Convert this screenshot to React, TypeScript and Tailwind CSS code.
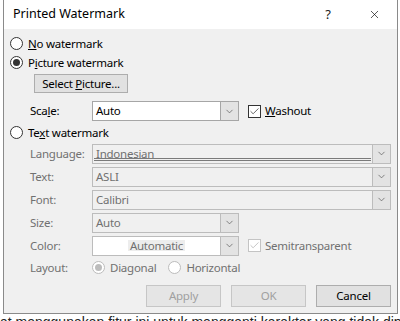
import { Check, ChevronDown, X } from "lucide-react";

const font = { fontFamily: '"Noto Sans", sans-serif' };

function Radio({ checked, disabled }: { checked?: boolean; disabled?: boolean }) {
  return (
    <span
      className={`flex h-[13px] w-[13px] shrink-0 items-center justify-center rounded-full border bg-white ${
        disabled ? "border-[#bcbcbc]" : "border-[#333333]"
      }`}
    >
      {checked && (
        <span className={`h-[7px] w-[7px] rounded-full ${disabled ? "bg-[#bcbcbc]" : "bg-[#333333]"}`} />
      )}
    </span>
  );
}

function Combo({
  value,
  wide,
  disabled,
  white,
  center,
  underline,
}: {
  value: string;
  wide?: boolean;
  disabled?: boolean;
  white?: boolean;
  center?: boolean;
  underline?: boolean;
}) {
  return (
    <div
      className={`relative flex h-[20px] items-stretch border ${wide ? "w-[299px]" : "w-[147px]"} ${
        disabled ? "border-[#bcbcbc]" : "border-[#a6a6a6]"
      } ${white ? "bg-white" : "bg-[#f0f0f0]"}`}
    >
      <div className={`flex flex-1 items-center px-[3px] ${center ? "justify-center" : ""}`}>
        <span className={`leading-none ${disabled ? "text-[#707070]" : "text-black"} ${center ? "bg-[#ededed] px-[2px]" : ""}`}>
          {value}
        </span>
      </div>
      {underline && (
        <div className="absolute bottom-[2px] left-[1px] right-[19px] flex flex-col gap-[1px]">
          <div className="h-px bg-[#7a7a7a]" />
          <div className="h-px bg-[#7a7a7a]" />
        </div>
      )}
      <div
        className={`flex w-[18px] items-center justify-center border-l ${
          disabled ? "border-[#bcbcbc]" : "border-[#a6a6a6]"
        } bg-[#e3e3e3]`}
      >
        <ChevronDown size={11} strokeWidth={1.5} className="text-[#555555]" />
      </div>
    </div>
  );
}

function Row({ label, children }: { label: string; children: React.ReactNode }) {
  return (
    <div className="flex h-[23px] items-center">
      <span className="box-content w-[62px] pl-[26px] text-[#707070]">{label}</span>
      {children}
    </div>
  );
}

export default function App() {
  return (
    <div className="h-[321px] w-[400px] overflow-hidden bg-white text-[11.5px] tracking-[-0.25px]" style={font}>
      <div className="ml-[3px] h-[314px] w-[395px] border-x border-b border-[#8a8a8a] bg-[#f0f0f0]">
        {/* title bar */}
        <div className="flex h-[29px] items-center bg-white pl-[9px] pr-[16px] tracking-normal">
          <span className="text-[12.5px] text-black">Printed Watermark</span>
          <span className="ml-auto mr-[37px] text-[13px] text-[#222222]">?</span>
          <X size={13} strokeWidth={1.2} className="text-black" />
        </div>

        <div className="pl-[6px] pt-[5px]">
          <div className="flex h-[19px] items-center gap-[5px]">
            <Radio />
            <span>
              <u>N</u>o watermark
            </span>
          </div>
          <div className="flex h-[19px] items-center gap-[5px]">
            <Radio checked />
            <span>
              P<u>i</u>cture watermark
            </span>
          </div>
          <div className="mt-[2px] pl-[24px]">
            <button className="flex h-[19px] w-[94px] items-center justify-center border border-[#adadad] bg-[#e1e1e1] text-black">
              <span>
                Select <u>P</u>icture...
              </span>
            </button>
          </div>
          <div className="mt-[8px] flex h-[20px] items-center">
            <span className="box-content w-[62px] pl-[20px] text-black">
              Sca<u>l</u>e:
            </span>
            <Combo value="Auto" white />
            <span className="ml-[9px] flex h-[13px] w-[13px] items-center justify-center border border-[#333333] bg-white">
              <Check size={11} strokeWidth={1.6} className="text-[#333333]" />
            </span>
            <span className="ml-[4px]">
              <u>W</u>ashout
            </span>
          </div>
          <div className="mt-[2px] flex h-[19px] items-center gap-[5px]">
            <Radio />
            <span>
              Te<u>x</u>t watermark
            </span>
          </div>
          <div className="-ml-[6px]">
            <Row label="Language:">
              <Combo value="Indonesian" wide disabled underline />
            </Row>
            <Row label="Text:">
              <Combo value="ASLI" wide disabled />
            </Row>
            <Row label="Font:">
              <Combo value="Calibri" wide disabled />
            </Row>
            <Row label="Size:">
              <Combo value="Auto" disabled />
            </Row>
            <Row label="Color:">
              <Combo value="Automatic" disabled white center />
              <span className="ml-[9px] flex h-[13px] w-[13px] items-center justify-center border border-[#c4c4c4] bg-white">
                <Check size={11} strokeWidth={1.6} className="text-[#b0b0b0]" />
              </span>
              <span className="ml-[4px] text-[#707070]">Semitransparent</span>
            </Row>
            <div className="flex h-[21px] items-center text-[#707070]">
              <span className="box-content w-[62px] pl-[26px]">Layout:</span>
              <Radio checked disabled />
              <span className="ml-[5px]">Diagonal</span>
              <span className="ml-[12px]">
                <Radio disabled />
              </span>
              <span className="ml-[5px]">Horizontal</span>
            </div>
          </div>
          <div className="mt-[7px] flex justify-end gap-[10px] pr-[6px]">
            <button className="h-[22px] w-[75px] border border-[#c6c6c6] bg-[#e5e5e5] text-[#a0a0a0]">Apply</button>
            <button className="h-[22px] w-[75px] border border-[#c6c6c6] bg-[#e5e5e5] text-[#a0a0a0]">OK</button>
            <button className="h-[22px] w-[75px] border border-[#adadad] bg-[#e1e1e1] text-black">Cancel</button>
          </div>
        </div>
      </div>
      <div
        className="whitespace-nowrap pt-[1px] text-[14px] leading-[14px] tracking-normal text-[#222222]"
        style={{ fontFamily: '"Liberation Sans", sans-serif' }}
      >
        at menggunakan fitur ini untuk mengganti karakter yang tidak dipergunakan
      </div>
    </div>
  );
}
